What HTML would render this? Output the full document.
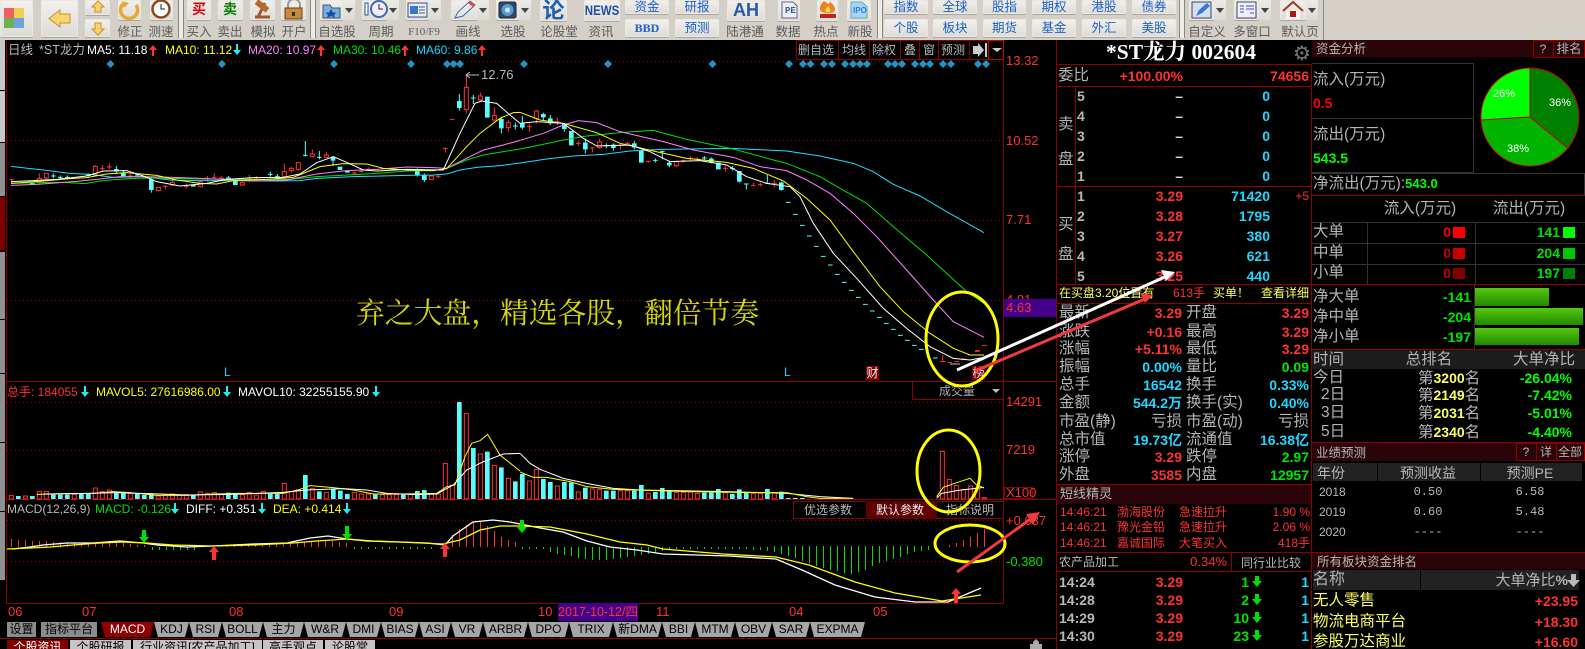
<!DOCTYPE html>
<html><head><meta charset="utf-8"><title>*ST龙力 002604</title>
<style>
html,body{margin:0;padding:0;background:#000}
#p{position:relative;width:1585px;height:649px;overflow:hidden;background:#000;font-family:"Liberation Sans","Noto Sans CJK SC",sans-serif;color:#b8b8b8}
.t{position:absolute;white-space:nowrap;line-height:0;font-size:12px}
.c{transform:translateX(-50%)}
.n{font-weight:bold;font-size:14px}
.g{font-size:15.5px;color:#b4b4b4}
.re{color:#ff3232}.cy{color:#1ed8ff}.gr{color:#00e600}.ye{color:#ffff64}.wh{color:#fff}
.m{font-family:"Liberation Mono",monospace}
.h,.v,.bx{position:absolute}
.h{height:1px;background:#8c0000}.v{width:1px;background:#8c0000}
#tb{position:absolute;left:0;top:0;width:1585px;height:40px;background:#d4d0c8}
.b{position:absolute;background:linear-gradient(#f2f1ed,#dddbd5);border-radius:2px;box-shadow:0 1px 0 #a8a69f,inset 0 0 0 1px #ece9e3}
.l{position:absolute;white-space:nowrap;line-height:0;top:32px;font-size:12.5px;color:#5a5a5a;transform:translateX(-50%)}
.s{position:absolute;top:0;width:4px;height:38px;border-left:1px solid #8a8880;border-right:1px solid #8a8880;background:#eeece6}
.bt{color:#1c5fc8;font-size:12.5px;text-align:center;line-height:15px}
.dd{position:absolute;top:0;height:20px;width:12px;background:linear-gradient(#ecebe6,#dcdad4)}
.dd:after{content:"";position:absolute;left:2px;top:8px;border:4px solid transparent;border-top:5px solid #444}
.tab{position:absolute;top:622px;height:15px;line-height:15px;font-size:12px;color:#000;background:#a6a6a6;text-align:center;clip-path:polygon(0 0,100% 0,calc(100% - 4px) 100%,4px 100%);white-space:nowrap;overflow:hidden}
.bt2{position:absolute;top:640px;height:12px;line-height:14px;font-size:12px;color:#000;background:#c4c4c4;text-align:center;white-space:nowrap;overflow:hidden}
.hd{position:absolute;background:#2a0408}
.tbh{position:absolute;background:#222}
.br{position:absolute;border:1px solid #8c0000;box-sizing:border-box}
svg{position:absolute;left:0;top:0}
</style></head><body><div id="p">

<div id="tb">
<div class="b" style="left:0;top:0;width:33px;height:37px"></div>
<div class="b" style="left:41px;top:0;width:37px;height:37px"></div>
<div class="b" style="left:85px;top:0;width:25px;height:15px"></div>
<div class="b" style="left:85px;top:19px;width:25px;height:18px"></div>
<div class="b" style="left:118px;top:0;width:23px;height:20px"></div>
<div class="b" style="left:150px;top:0;width:23px;height:20px"></div>
<div class="s" style="left:178px"></div>
<div class="b" style="left:187px;top:0;width:24px;height:20px"></div>
<div class="b" style="left:218px;top:0;width:25px;height:20px"></div>
<div class="b" style="left:250px;top:0;width:25px;height:20px"></div>
<div class="b" style="left:281px;top:0;width:25px;height:20px"></div>
<div class="s" style="left:310px"></div>
<div class="b" style="left:320px;top:0;width:23px;height:20px"></div><div class="dd" style="left:343px"></div>
<div class="b" style="left:362px;top:0;width:25px;height:20px"></div><div class="dd" style="left:387px"></div>
<div class="b" style="left:406px;top:0;width:23px;height:20px"></div><div class="dd" style="left:429px"></div>
<div class="b" style="left:451px;top:0;width:26px;height:20px"></div><div class="dd" style="left:477px"></div>
<div class="b" style="left:496px;top:0;width:23px;height:20px"></div><div class="dd" style="left:519px"></div>
<div class="b" style="left:540px;top:0;width:27px;height:21px;color:#1f5fb0;font:bold 22px/22px 'Liberation Sans','Noto Sans CJK SC',sans-serif;text-align:center">论</div>
<div class="b" style="left:584px;top:0;width:36px;height:21px"></div>
<span class="t c" style="left:602px;top:10px;font:bold 14px 'Liberation Sans',sans-serif;line-height:0;color:#1f4fa0;transform:translateX(-50%) scaleX(.82)">NEWS</span>
<div class="b bt" style="left:625px;top:0;width:44px;height:14px">资金</div>
<div class="b bt" style="left:625px;top:19px;width:44px;height:18px;line-height:18px;font:bold 12px/18px 'Liberation Serif',serif">BBD</div>
<div class="b bt" style="left:675px;top:0;width:44px;height:14px">研报</div>
<div class="b bt" style="left:675px;top:19px;width:44px;height:18px;line-height:18px">预测</div>
<div class="b" style="left:727px;top:0;width:38px;height:21px;color:#2a56a8;font:bold 18px/21px 'Liberation Sans',sans-serif;text-align:center">AH</div>
<div class="b" style="left:778px;top:0;width:22px;height:21px"></div>
<div class="b" style="left:817px;top:0;width:21px;height:21px"></div>
<div class="b" style="left:847px;top:0;width:24px;height:21px"></div>
<div class="s" style="left:877px"></div>
<div class="b bt" style="left:884px;top:0;width:44px;height:14px">指数</div><div class="b bt" style="left:884px;top:19px;width:44px;height:18px;line-height:18px">个股</div>
<div class="b bt" style="left:933px;top:0;width:44px;height:14px">全球</div><div class="b bt" style="left:933px;top:19px;width:44px;height:18px;line-height:18px">板块</div>
<div class="b bt" style="left:983px;top:0;width:43px;height:14px">股指</div><div class="b bt" style="left:983px;top:19px;width:43px;height:18px;line-height:18px">期货</div>
<div class="b bt" style="left:1032px;top:0;width:44px;height:14px">期权</div><div class="b bt" style="left:1032px;top:19px;width:44px;height:18px;line-height:18px">基金</div>
<div class="b bt" style="left:1082px;top:0;width:44px;height:14px">港股</div><div class="b bt" style="left:1082px;top:19px;width:44px;height:18px;line-height:18px">外汇</div>
<div class="b bt" style="left:1132px;top:0;width:44px;height:14px">债券</div><div class="b bt" style="left:1132px;top:19px;width:44px;height:18px;line-height:18px">美股</div>
<div class="s" style="left:1179px"></div>
<div class="b" style="left:1189px;top:0;width:25px;height:20px"></div><div class="dd" style="left:1214px"></div>
<div class="b" style="left:1234px;top:0;width:25px;height:20px"></div><div class="dd" style="left:1259px"></div>
<div class="b" style="left:1280px;top:0;width:26px;height:20px"></div><div class="dd" style="left:1306px"></div>
<div style="position:absolute;left:1323px;top:0;width:1px;height:40px;background:#8a8880"></div>

<span class="l" style="left:130px">修正</span><span class="l" style="left:161px">测速</span><span class="l" style="left:199px">买入</span><span class="l" style="left:230px">卖出</span><span class="l" style="left:263px">模拟</span><span class="l" style="left:294px">开户</span><span class="l" style="left:337px">自选股</span><span class="l" style="left:381px">周期</span><span class="l" style="left:424px;font-family:'Liberation Serif',serif;font-size:11px">F10/F9</span><span class="l" style="left:468px">画线</span><span class="l" style="left:513px">选股</span><span class="l" style="left:559px">论股堂</span><span class="l" style="left:601px">资讯</span><span class="l" style="left:745px">陆港通</span><span class="l" style="left:788px">数据</span><span class="l" style="left:826px">热点</span><span class="l" style="left:860px">新股</span><span class="l" style="left:1207px">自定义</span><span class="l" style="left:1252px">多窗口</span><span class="l" style="left:1300px">默认页</span>
<span class="t" style="left:192px;top:9px;font-size:14px;font-weight:bold;color:#e00000">买</span>
<span class="t" style="left:223px;top:9px;font-size:14px;font-weight:bold;color:#008000">卖</span>

<svg width="1585" height="40">
<rect x="4" y="8" width="10" height="10" fill="#f06060"/><rect x="14" y="8" width="10" height="10" fill="#f0d050"/><rect x="4" y="18" width="10" height="10" fill="#6cb050"/><rect x="14" y="18" width="10" height="10" fill="#6ca4e0"/>
<path d="M49 18.5L60 10V14H70V23H60V27Z" fill="#fad36c" stroke="#c8902c"/>
<path d="M98 1L104 7H101V12H95V7H92Z" fill="#fad36c" stroke="#c8902c"/>
<path d="M98 35L104 29H101V23H95V29H92Z" fill="#fad36c" stroke="#c8902c"/>
<path d="M136 5A8.500 8.500 0 1 1 123 4" fill="none" stroke="#e8a838" stroke-width="3.500"/><path d="M122 1L129 3L124 8Z" fill="#e8a838"/>
<circle cx="161" cy="9" r="8.500" fill="#fff" stroke="#8a4a20" stroke-width="2.500"/><path d="M161 4V9H165" fill="none" stroke="#222"/>
<path d="M255 17H270M258 17L265 3" stroke="#a05828" stroke-width="3" fill="none"/><rect x="255" y="3" width="14" height="6" fill="#b8682c" transform="rotate(38 262 6)"/>
<path d="M288 8V5A6 6 0 0 1 300 5V8" fill="none" stroke="#999" stroke-width="2"/><rect x="285" y="8" width="17" height="11" fill="#c88a3c" stroke="#6a4318"/><rect x="292" y="12" width="3" height="4" fill="#333"/>
<path d="M323 5H330L332 8H340V18H323Z" fill="#78aee8" stroke="#456"/><path d="M331 9L333 12.500H336.500L334 15L335 18L331 16L327 18L328 15L325.500 12.500H329Z" fill="#1c4c98"/>
<circle cx="379" cy="9" r="8" fill="#eef" stroke="#4468a8" stroke-width="2"/><rect x="365" y="3" width="3" height="12" fill="#fff" stroke="#2a4c9a"/><path d="M379 4V9H383" stroke="#223" fill="none"/>
<rect x="408" y="3" width="19" height="14" fill="#e8eefc" stroke="#334f88"/><rect x="410" y="6" width="8" height="8" fill="#3a78d0"/><path d="M419 7h6M419 10h6M419 13h6" stroke="#556"/>
<path d="M455 18L458 12L470 1L475 5L463 16Z" fill="#e8e8e8" stroke="#3a6ab0"/><path d="M468 3L473 7L475 5L470 1Z" fill="#e04848"/>
<rect x="499" y="2" width="17" height="16" rx="2" fill="#2a4a70" stroke="#223"/><circle cx="507.500" cy="10" r="6" fill="#5a9acc"/><circle cx="507.500" cy="10" r="2.500" fill="#c8e4f8"/>
<path d="M782 2H793L797 6V18H782Z" fill="#e8eefc" stroke="#667"/>
<path d="M824 1C820 5 820 6 820 9C820 12 824 13 828 13C832 13 835 12 835 9C835 6 832 4 830 1C830 4 828 5 827 3Z" fill="#f08020"/><path d="M826 12C824 9 827 8 828 6C829 8 831 9 830 12Z" fill="#ffe040"/><rect x="820" y="14" width="16" height="4" fill="#c02020"/>
<path d="M851 2H862L867 7V18H851Z" fill="#a8d4f4" stroke="#6aa"/>
<rect x="1192" y="2" width="19" height="16" fill="#cfe0f6" stroke="#445"/><path d="M1196 16L1199 10L1207 3L1210 6L1202 13Z" fill="#3a78d0"/>
<rect x="1237" y="2" width="19" height="16" fill="#eef" stroke="#445"/><path d="M1240 6h4M1240 9h4M1240 12h4M1246 6h8M1246 9h8M1250 13h4" stroke="#3a58a8"/>
<path d="M1283 11L1293 2L1303 11" fill="none" stroke="#a03a28" stroke-width="2"/><rect x="1286" y="10" width="14" height="9" fill="#f4f2ee"/><rect x="1290" y="11" width="6" height="6" fill="#b01818"/>
</svg>
<span class="t" style="left:785px;top:11px;font:bold 9px 'Liberation Mono',monospace;line-height:0;color:#3a5a90">PE</span>
<span class="t" style="left:853px;top:11px;font:bold 8px 'Liberation Sans',sans-serif;line-height:0;color:#2b80d8">IPO</span>
</div>

<!-- left strip -->
<div class="bx" style="left:0;top:40px;width:5px;height:50px;background:#c8c8c8"></div>
<div class="bx" style="left:0;top:91px;width:5px;height:51px;background:#c8c8c8"></div>
<div class="bx" style="left:0;top:143px;width:5px;height:53px;background:#909090"></div>
<div class="bx" style="left:0;top:197px;width:5px;height:53px;background:#800000"></div>
<div class="bx" style="left:0;top:252px;width:5px;height:67px;background:#909090"></div>
<div class="bx" style="left:0;top:320px;width:5px;height:53px;background:#909090"></div>
<div class="bx" style="left:0;top:374px;width:5px;height:68px;background:#909090"></div>
<div class="bx" style="left:0;top:443px;width:5px;height:68px;background:#909090"></div>
<div class="bx" style="left:0;top:512px;width:5px;height:68px;background:#909090"></div>

<!-- chart svg -->
<svg width="1585" height="649">
<defs>
<path id="ad" d="M-1-6h2v6h3l-4 5l-4-5h3z" fill="#2ee"/>
<path id="au" d="M-1 6h2v-6h3l-4-5l-4 5h3z" fill="#f33"/>
<path id="dia" d="M0-4L4 0L0 4L-4 0Z" fill="#1f96c8"/>
</defs>
<g stroke="#8c0000" stroke-width="1" stroke-dasharray="1 3" fill="none">
<path d="M7 61.500H1003M7 140.500H1003M7 220.500H1003M7 300.500H1003M7 402.500H1003M7 450.500H1003M7 520.500H1003M7 561.500H1003"/>
</g>
<g fill="none" stroke="#8c0000"><path d="M6.500 40V603.500H1003.500M1003.500 40V603.500M7 381.500H1056M7 499.500H1056M1056.500 40V649M0 638.500H1056"/></g>
<g>
<use href="#dia" x="110.500" y="64"/><use href="#dia" x="222" y="64"/><use href="#dia" x="334" y="64"/><use href="#dia" x="411" y="64"/><use href="#dia" x="447" y="64"/><use href="#dia" x="453.500" y="64"/><use href="#dia" x="460" y="64"/><use href="#dia" x="524" y="64"/><use href="#dia" x="608" y="64"/><use href="#dia" x="712.500" y="64"/><use href="#dia" x="789" y="64"/><use href="#dia" x="803" y="64"/><use href="#dia" x="810.500" y="64"/><use href="#dia" x="824" y="64"/><use href="#dia" x="832" y="64"/><use href="#dia" x="845" y="64"/><use href="#dia" x="853" y="64"/><use href="#dia" x="860" y="64"/><use href="#dia" x="867" y="64"/><use href="#dia" x="888" y="64"/><use href="#dia" x="895" y="64"/><use href="#dia" x="902" y="64"/><use href="#dia" x="915" y="64"/><use href="#dia" x="923" y="64"/><use href="#dia" x="930" y="64"/><use href="#dia" x="943" y="64"/><use href="#dia" x="951" y="64"/><use href="#dia" x="978" y="64"/><use href="#dia" x="986" y="64"/>
</g>
<use href="#au" x="153" y="50"/><use href="#ad" x="237" y="50"/><use href="#au" x="321" y="50"/><use href="#au" x="405" y="50"/><use href="#au" x="482" y="50"/>
<use href="#ad" x="85" y="392"/><use href="#ad" x="227" y="392"/><use href="#ad" x="376" y="392"/>
<use href="#ad" x="175" y="509"/><use href="#ad" x="262" y="509"/><use href="#ad" x="347" y="509"/>

<!-- main chart left -->
<g transform="translate(0,70) scale(.33333)" fill="none" stroke-width="3">
<path stroke="#ff3232" d="M118 310V340M139 310V330M286 285V315M517 330V348M601 332V352M853 280V325M895 276V302M937 238V262M874 290V308M979 245V262M1294 318V330M1399 15V130M1441 68V95M1483 112V155M1525 150V185M727 335V348M475 352V362M28 328h14M35 328V340M307 285V305M300 295h14M328 280V298M321 291h14M391 312V325M384 318h14M496 345V358M489 349h14M559 340V355M552 349h14M622 318V335M615 325h14M643 310V328M636 322h14M664 318V330M657 324h14M748 315V335M741 325h14M769 318V330M762 324h14M1063 305V315M1056 309h14M1084 300V308M1077 304h14M1105 292V302M1098 298h14M1315 315V325M1308 319h14M1329 235h14M1336 235V248M1350 148h14"/>
<path stroke="#ff3232" fill="#000" d="M112 325h12v10h-12zM133 310h12v14h-12zM280 289h12v23h-12zM469 352h12v10h-12zM511 337h12v8h-12zM595 336h12v14h-12zM847 305h12v15h-12zM889 278h12v20h-12zM931 252h12v8h-12zM868 295h12v7h-12zM973 255h12v7h-12zM1288 318h12v10h-12zM1393 52h12v66h-12zM1435 78h12v12h-12zM1477 136h12v14h-12zM1519 158h12v15h-12zM721 338h12v7h-12z"/>
<path stroke="#55ffff" d="M454 325V368M1252 295V320M1273 310V336M1378 72V122M1504 140V190M999 258V288M349 288V310M370 300V320M160 310V325M153 318h14M181 316V328M174 322h14M202 316V328M195 322h14M412 310V320M405 315h14M685 318V330M678 324h14M811 305V320M804 313h14M832 312V325M825 319h14M916 213V260M909 256h14M958 243V268M951 262h14M1420 75V102M1413 84h14M1546 158V178M1539 168h14M265 310V320"/>
<path stroke="#55ffff" stroke-width="14" d="M454 328V360M97 338V345M706 332V345M1252 303V315M1273 315V330M1378 93V114M1462 80V143M1504 147V175M999 262V272M1020 290V300M1042 302V308M370 308V318M349 297V304M580 345V350M265 313V318"/>
<g stroke-width="3">
<polyline stroke="#22ddff" points="33,289 85,295 130,300 210,310 270,313 340,322 430,320 510,330 600,332 700,332 830,333 900,332 950,325 1060,320 1220,316 1300,315 1340,312 1380,300 1430,292 1500,287 1560,279"/>
<polyline stroke="#00e000" points="33,340 120,338 190,337 255,341 300,333 350,328 430,324 510,325 620,327 760,328 870,328 950,320 1020,316 1130,310 1220,303 1300,302 1340,295 1400,270 1450,255 1510,245 1560,237"/>
<polyline stroke="#ff80ff" points="33,346 110,343 230,334 300,327 360,320 430,320 520,322 620,326 760,333 860,330 950,312 1040,302 1130,298 1220,291 1300,293 1340,295 1400,265 1450,240 1510,225 1560,211"/>
<polyline stroke="#ffff00" points="33,340 130,333 210,326 260,323 320,312 380,308 470,316 530,330 600,340 650,342 700,332 800,328 880,322 960,290 1030,281 1100,282 1150,295 1220,300 1300,302 1340,296 1400,230 1440,190 1500,145 1540,128 1560,127"/>
<polyline stroke="#fff" points="33,335 100,332 170,328 260,318 310,303 380,302 430,318 470,335 540,348 620,340 680,328 760,323 850,322 900,312 950,278 1000,260 1040,277 1090,300 1130,303 1220,298 1330,300 1380,190 1425,100 1445,93 1490,100 1530,135 1560,160"/>
</g>
</g>

<!-- main chart right -->
<g transform="translate(520,70) scale(.33333)" fill="none" stroke-width="3">
<path stroke="#ff3232" d="M49 120V160M239 205V236M469 272V292M28 160V185M21 170h14M112 142V165M105 155h14M175 212V228M168 220h14M217 232V248M210 234h14M301 222V238M294 226h14M322 216V228M315 220h14M385 272V278M378 274h14M490 268V278M483 272h14M511 258V272M504 265h14M532 262V272M525 267h14M616 288V305M609 295h14M700 338V348M693 347h14M721 338V350M714 344h14M763 330V352M756 340h14M1268 855V875M1259 875h18M1282 878h14M1303 875h14M1344 855h14M1386 826h14"/>
<path stroke="#ff3232" fill="#000" d="M43 123h12v22h-12zM233 216h12v17h-12zM463 274h12v13h-12z"/>
<path stroke="#ff3232" stroke-width="5" d="M1365 843h14M1323 868h14"/>
<path stroke="#55ffff" d="M7 138V178M91 135V165M133 160V185M196 205V250M343 213V238M448 272V292M574 262V280M658 303V338M784 335V362M70 128V152M280 220V242M259 220V235M252 227h14M406 265V278M399 271h14M427 242V268M420 244h14M553 258V272M546 264h14M637 288V302M630 295h14M679 340V358M672 342h14M742 315V340M735 340h14"/>
<path stroke="#55ffff" stroke-width="14" d="M7 160V173M91 145V160M133 160V177M154 183V226M196 218V238M364 240V278M343 220V232M448 278V286M574 266V278M595 278V298M658 303V335M784 337V360M70 132V142M280 224V234"/>
<path stroke="#55ffff" d="M798 397h14M819 433h14M840 466h14M861 498h14M882 529h14M903 559h14M924 585h14M945 613h14M966 637h14M987 661h14M1008 682h14M1029 703h14M1050 723h14M1071 742h14M1092 760h14M1113 778h14M1134 796h14M1155 811h14M1176 826h14M1197 838h14M1239 864h14"/>
<polyline stroke="#22ddff" points="0,279 80,267 160,258 250,253 330,243 420,238 640,235 800,243 900,258 1000,280 1060,305 1120,343 1200,378 1280,425 1392,488"/>
<polyline stroke="#00e000" points="0,237 60,225 130,210 200,198 300,188 400,181 500,208 640,237 760,270 800,280 900,320 960,355 1040,400 1120,470 1220,555 1340,665 1392,700"/>
<polyline stroke="#ff80ff" points="0,211 70,190 130,165 175,152 230,158 300,185 430,215 520,240 640,262 720,290 800,302 860,330 930,370 1000,430 1070,500 1160,600 1240,690 1300,755 1392,802"/>
<polyline stroke="#ffff00" points="0,127 60,150 130,160 230,188 300,220 400,243 500,265 620,277 700,295 790,333 860,385 930,450 1000,545 1080,650 1150,725 1230,790 1300,835 1350,855 1392,855"/>
<polyline stroke="#fff" points="0,160 50,155 130,160 190,205 230,228 330,225 390,245 450,275 540,272 620,285 680,320 740,340 810,350 840,380 880,460 940,550 1010,625 1090,715 1160,775 1230,830 1300,865 1350,870 1392,862"/>
<path stroke="#bbb" stroke-width="3" d="M1290 882h30"/>
</g>

<!-- peak marker -->
<path d="M466 75h13M470 72l-4 3l4 3" stroke="#bbb" fill="none"/>

<!-- volume bars -->
<g transform="translate(0,370) scale(.33333)" fill="none" stroke-width="3">
<path stroke="#55ffff" stroke-width="14" d="M55 378V387M97 378V387M160 374V387M181 374V387M202 374V387M244 370V387M265 370V387M349 366V387M370 366V387M412 372V387M433 375V387M454 370V387M580 374V387M685 368V387M706 370V387M811 372V387M832 372V387M916 315V387M958 364V387M1000 358V387M1021 362V387M1042 372V387M1126 374V387M1210 374V387M1252 363V387M1273 360V387M1378 96V387M1420 234V387M1462 245V387M1504 292V387M1546 334V387"/>
<path stroke="#ff3232" d="M28 376h12V387h-12zM70 378h12V387h-12zM112 364h12V387h-12zM133 364h12V387h-12zM217 373h12V387h-12zM280 354h12V387h-12zM301 365h12V387h-12zM322 360h12V387h-12zM385 370h12V387h-12zM469 378h12V387h-12zM490 375h12V387h-12zM511 372h12V387h-12zM532 376h12V387h-12zM553 374h12V387h-12zM595 366h12V387h-12zM616 370h12V387h-12zM637 368h12V387h-12zM658 372h12V387h-12zM721 374h12V387h-12zM742 367h12V387h-12zM763 375h12V387h-12zM784 364h12V387h-12zM847 340h12V387h-12zM868 365h12V387h-12zM889 360h12V387h-12zM931 355h12V387h-12zM973 367h12V387h-12zM1057 368h12V387h-12zM1078 372h12V387h-12zM1099 372h12V387h-12zM1141 374h12V387h-12zM1162 374h12V387h-12zM1183 374h12V387h-12zM1225 373h12V387h-12zM1288 372h12V387h-12zM1309 372h12V387h-12zM1330 280h12V387h-12zM1351 345h12V387h-12zM1393 130h12V387h-12zM1435 252h12V387h-12zM1477 286h12V387h-12zM1519 325h12V387h-12z"/>
<polyline stroke="#ffff00" points="110,373 200,371 280,370 340,365 390,368 470,376 560,376 640,372 720,370 850,370 900,358 930,347 1000,353 1060,360 1120,372 1200,372 1310,370 1340,350 1365,345 1395,260 1415,220 1440,212 1463,193 1500,255 1560,303"/>
<polyline stroke="#fff" points="130,372 230,371 350,368 480,372 560,375 700,373 850,367 920,360 1030,356 1100,360 1160,370 1250,374 1310,372 1360,345 1400,300 1450,275 1510,252 1560,250"/>
</g>
<g transform="translate(520,370) scale(.33333)" fill="none" stroke-width="3">
<path stroke="#55ffff" stroke-width="14" d="M7 312V387M70 327V387M91 336V387M133 336V387M154 338V387M196 353V387M259 362V387M280 362V387M343 362V387M364 345V387M406 366V387M427 354V387M448 362V387M553 368V387M574 368V387M595 357V387M637 372V387M658 358V387M679 366V387M742 357V387M784 365V387M805 384V387M826 384V387M847 384V387"/>
<path stroke="#ff3232" d="M22 333h12V387h-12zM43 298h12V387h-12zM106 348h12V387h-12zM169 366h12V387h-12zM211 357h12V387h-12zM232 358h12V387h-12zM295 362h12V387h-12zM316 362h12V387h-12zM379 370h12V387h-12zM463 368h12V387h-12zM484 368h12V387h-12zM505 366h12V387h-12zM526 370h12V387h-12zM610 368h12V387h-12zM694 370h12V387h-12zM715 370h12V387h-12zM757 368h12V387h-12zM1261 244h12V387h-12zM1282 328h12V387h-12zM1303 346h12V387h-12zM1324 358h12V387h-12zM1345 348h12V387h-12zM1366 354h12V387h-12zM1387 383h12V387h-12z"/>
<polyline stroke="#fff" points="0,250 30,280 60,298 130,325 200,340 280,355 360,360 620,365 800,370 900,380 1000,385"/>
<polyline stroke="#ffff00" points="0,306 40,322 80,322 150,335 200,350 280,358 340,360 500,365 700,368 800,368 860,380 900,385 1000,385"/>
<polyline stroke="#fff" points="1250,385 1265,370 1310,362 1392,352"/>
<polyline stroke="#ffff00" points="1250,380 1270,352 1310,338 1350,325 1370,345 1392,354"/>
</g>

<!-- MACD bars -->
<g transform="translate(.5,0)">
<path fill="none" stroke="#ff3232" d="M11 547V539M18 547V540M25 547V540M32 547V541M39 547V541M46 547V541M53 547V542M60 547V542M67 547V542M74 547V542M81 547V543M88 547V543M95 547V543M102 547V543M109 547V543M116 547V543M123 547V543M130 547V544M137 547V545M144 547V545M227 547V545M234 547V544M241 547V544M248 547V545M255 547V545M262 547V544M269 547V544M276 547V544M283 547V544M290 547V543M297 547V543M304 547V542M311 547V541M318 547V540M325 547V540M332 547V541M339 547V542M346 547V543M452 547V535M459 547V529M466 547V525M473 547V522M480 547V521M487 547V526M494 547V531M501 547V537M508 547V540M515 547V542M949 547V545M956 547V543M963 547V540M970 547V537M977 547V533M984 547V529"/>
<path fill="none" stroke="#00e000" d="M152 547V550M159 547V550M166 547V550M173 547V550M180 547V550M187 547V550M194 547V550M354 547V549M361 547V549M368 547V549M375 547V549M382 547V549M389 547V549M396 547V549M403 547V549M410 547V549M417 547V549M424 547V549M431 547V549M522 547V549M529 547V549M536 547V549M543 547V549M550 547V552M557 547V554M564 547V555M571 547V556M578 547V558M585 547V559M592 547V560M599 547V560M606 547V560M613 547V559M620 547V558M627 547V557M634 547V556M641 547V555M648 547V554M655 547V553M662 547V551M669 547V550M676 547V549M683 547V549M690 547V549M697 547V549M704 547V549M711 547V549M718 547V549M725 547V549M732 547V549M739 547V549M746 547V549M753 547V550M760 547V550M767 547V551M774 546V552M781 546V554M788 546V556M795 546V558M802 546V561M809 546V563M816 546V566M823 546V568M830 546V570M837 546V571M844 546V573M851 546V574M858 546V572M865 546V570M872 546V566M879 546V563M886 546V561M893 546V559M900 546V557M907 546V554M914 546V552M921 546V551M928 546V550M935 546V549"/>
</g>
<polyline fill="none" stroke="#fff" stroke-width="1.300" points="12,549 30,547 43,545 67,543 93,543 120,541 143,543 157,545 187,547 213,546 253,544 287,543 310,538 328,536 347,539 367,541 400,542 427,543 445,545 453,536 473,522 493,520 510,522 520,524 540,528 563,532 587,541 610,547 637,550 663,554 729,556 776,559 802,570 835,585 875,597 915,602 948,602 981,588"/>
<polyline fill="none" stroke="#ffff00" stroke-width="1.300" points="7,549 30,548 50,547 73,545 100,543 123,542 147,543 173,545 213,546 253,545 293,543 317,541 347,539 373,541 400,542 443,544 460,540 480,530 500,526 520,526 550,527 587,534 620,542 647,545 663,549 723,554 776,557 809,565 855,582 895,593 942,601 981,595"/>
<path fill="#00e000" d="M142 530h4v7h3l-5 6l-5-6h3zM345 526h4v8h3l-5 6l-5-6h3zM520 520h4v7h3l-5 6l-5-6h3z"/>
<path fill="#ff3232" d="M212 560h4v-8h3l-5-6l-5 6h3zM443 557h4v-8h3l-5-6l-5 6h3zM954 603h4v-9h3l-5-6l-5 6h3z"/>
<path d="M1030 649V644H1033V642L1036 639L1039 642V644H1042V649Z" fill="#aaa"/>
</svg>

<!-- chart legend -->
<span class="t" style="left:8px;top:50px;font-size:12.500px">日线</span>
<span class="t" style="left:39px;top:50px;font-size:12.500px">*ST龙力</span>
<span class="t" style="left:87px;top:50px;color:#fff">MA5: 11.18</span>
<span class="t" style="left:165px;top:50px;color:#ffff00">MA10: 11.12</span>
<span class="t" style="left:248px;top:50px;color:#ff80ff">MA20: 10.97</span>
<span class="t" style="left:333px;top:50px;color:#00e000">MA30: 10.46</span>
<span class="t" style="left:416px;top:50px;color:#10d8ff">MA60: 9.86</span>

<div class="br" style="left:796px;top:40px;width:208px;height:20px;border-color:#8c0000"></div>
<div class="v" style="left:838px;top:40px;height:20px"></div><div class="v" style="left:869px;top:40px;height:20px"></div><div class="v" style="left:900px;top:40px;height:20px"></div><div class="v" style="left:919px;top:40px;height:20px"></div><div class="v" style="left:938px;top:40px;height:20px"></div><div class="v" style="left:969px;top:40px;height:20px"></div>
<div class="br" style="left:988px;top:40px;width:16px;height:20px;border-color:#d00000"></div>
<span class="t" style="left:798px;top:50px">删自选</span><span class="t" style="left:842px;top:50px">均线</span><span class="t" style="left:872px;top:50px">除权</span><span class="t" style="left:904px;top:50px">叠</span><span class="t" style="left:923px;top:50px">窗</span><span class="t" style="left:941px;top:50px">预测</span>
<svg width="1585" height="70" style="pointer-events:none"><path d="M973 46h5v-3l6 7l-6 7v-3h-5zM985 43h2v14h-2zM992 48h10l-5 4z" fill="#ccc"/></svg>

<span class="t re" style="left:1006px;top:61px;font-size:13px">13.32</span>
<span class="t re" style="left:1006px;top:141px;font-size:13px">10.52</span>
<span class="t re" style="left:1006px;top:220px;font-size:13px">7.71</span>
<span class="t re" style="left:1006px;top:300px;font-size:13px">4.91</span>
<div class="bx" style="left:1004px;top:299px;width:52px;height:18px;background:#440088"></div>
<span class="t re" style="left:1006px;top:308px;font-size:13px">4.63</span>

<span class="t" style="left:481px;top:75px;font-size:13px;color:#b8b8b8">12.76</span>
<span class="t" style="left:356px;top:314px;font-size:28.800px;color:#d8d800;font-family:'Liberation Serif','Noto Serif CJK SC',serif">弃之大盘，精选各股，翻倍节奏</span>
<span class="t" style="left:224px;top:372px;color:#10d8ff;font-size:12px">L</span>
<span class="t" style="left:784px;top:372px;color:#10d8ff;font-size:12px">L</span>
<div class="bx" style="left:866px;top:366px;width:13px;height:14px;background:#800000;color:#eee;font-size:12px;line-height:14px;text-align:center">财</div>
<div class="bx" style="left:972px;top:366px;width:13px;height:14px;background:#800000;color:#eee;font-size:12px;line-height:14px;text-align:center">榜</div>

<span class="t re" style="left:7px;top:392px">总手: 184055</span>
<span class="t" style="left:96px;top:392px;color:#ffff00">MAVOL5: 27616986.00</span>
<span class="t" style="left:238px;top:392px;color:#fff">MAVOL10: 32255155.90</span>
<div class="br" style="left:912px;top:382px;width:92px;height:18px;border-top:0"></div>
<span class="t c" style="left:957px;top:391px;color:#aaa">成交量</span>
<svg width="1585" height="400"><path d="M992 389h8l-4 4z" fill="#bbb"/></svg>
<span class="t re" style="left:1006px;top:402px;font-size:13px">14291</span>
<span class="t re" style="left:1006px;top:450px;font-size:13px">7219</span>
<div class="br" style="left:1004px;top:487px;width:29px;height:12px"></div>
<span class="t re" style="left:1006px;top:493px;font-size:13px">X100</span>

<span class="t" style="left:7px;top:509px;color:#b8b8b8">MACD(12,26,9)</span>
<span class="t" style="left:95px;top:509px;color:#00e000">MACD: -0.126</span>
<span class="t" style="left:186px;top:509px;color:#fff">DIFF: +0.351</span>
<span class="t" style="left:273px;top:509px;color:#ffff00">DEA: +0.414</span>
<div class="br" style="left:793px;top:501px;width:211px;height:18px"></div>
<div class="bx" style="left:866px;top:501px;width:71px;height:18px;background:#600000"></div>
<span class="t c" style="left:828px;top:510px;color:#b8b8b8">优选参数</span><span class="t c" style="left:900px;top:510px;color:#eee">默认参数</span><span class="t c" style="left:970px;top:510px;color:#b8b8b8">指标说明</span>
<span class="t re" style="left:1006px;top:521px;font-size:13px">+0.637</span>
<span class="t gr" style="left:1006px;top:562px;font-size:13px">-0.380</span>

<span class="t re" style="left:8px;top:612px;font-size:13px">06</span><span class="t re" style="left:82px;top:612px;font-size:13px">07</span><span class="t re" style="left:229px;top:612px;font-size:13px">08</span><span class="t re" style="left:389px;top:612px;font-size:13px">09</span><span class="t re" style="left:538px;top:612px;font-size:13px">10</span><span class="t re" style="left:656px;top:612px;font-size:13px">11</span><span class="t re" style="left:789px;top:612px;font-size:13px">04</span><span class="t re" style="left:873px;top:612px;font-size:13px">05</span>
<div class="bx" style="left:558px;top:603px;width:80px;height:18px;background:#44008c"></div>
<span class="t re c" style="left:598px;top:612px;font-size:12.500px">2017-10-12/四</span>

<div class="tab" style="left:7px;width:29px;background:#8c8c8c;clip-path:none">设置</div>
<div class="tab" style="left:41px;width:56px;background:#8c8c8c;clip-path:none">指标平台</div>
<div class="tab" style="left:101px;width:53px;background:#900000;color:#fff">MACD</div>
<div class="tab" style="left:154px;width:35px">KDJ</div><div class="tab" style="left:189px;width:33px">RSI</div><div class="tab" style="left:222px;width:41px">BOLL</div><div class="tab" style="left:263px;width:41px">主力</div><div class="tab" style="left:304px;width:42px">W&amp;R</div><div class="tab" style="left:346px;width:35px">DMI</div><div class="tab" style="left:381px;width:38px">BIAS</div><div class="tab" style="left:419px;width:32px">ASI</div><div class="tab" style="left:451px;width:32px">VR</div><div class="tab" style="left:483px;width:45px">ARBR</div><div class="tab" style="left:528px;width:41px">DPO</div><div class="tab" style="left:569px;width:44px">TRIX</div><div class="tab" style="left:613px;width:49px">新DMA</div><div class="tab" style="left:662px;width:33px">BBI</div><div class="tab" style="left:695px;width:40px">MTM</div><div class="tab" style="left:735px;width:37px">OBV</div><div class="tab" style="left:772px;width:38px">SAR</div><div class="tab" style="left:810px;width:55px">EXPMA</div>
<div class="bt2" style="left:7px;width:61px;background:#800000;color:#fff">个股资讯</div><div class="bt2" style="left:70px;width:61px">个股研报</div><div class="bt2" style="left:133px;width:129px">行业资讯[农产品加工]</div><div class="bt2" style="left:263px;width:60px">高手观点</div><div class="bt2" style="left:325px;width:50px">论股堂</div>

<!-- quote panel -->
<span class="t c" style="left:1181px;top:52px;font:bold 21.5px 'Liberation Serif','Noto Serif CJK SC',serif;line-height:0;color:#fff">*ST龙力 002604</span>
<span class="t" style="left:1293px;top:53px;font:20px 'DejaVu Sans',sans-serif;line-height:0;color:#777">⚙</span>
<div class="br" style="left:1056px;top:64px;width:256px;height:585px;border-bottom:0"></div>
<div class="h" style="left:1056px;top:86px;width:255px"></div>
<div class="h" style="left:1056px;top:186px;width:255px"></div>
<div class="h" style="left:1056px;top:284px;width:255px"></div>
<div class="h" style="left:1056px;top:303px;width:255px"></div>
<div class="h" style="left:1056px;top:484px;width:255px"></div>
<div class="h" style="left:1056px;top:552px;width:255px"></div>
<div class="h" style="left:1056px;top:571px;width:255px"></div>
<div class="v" style="left:1075px;top:86px;height:198px"></div>
<div class="v" style="left:1231px;top:552px;height:19px"></div>
<div class="bx" style="left:1057px;top:485px;width:254px;height:19px;background:#2a0408"></div>

<span class="t g" style="left:1058px;top:76px">委比</span>
<span class="t n re" style="right:402px;top:76px">+100.00%</span>
<span class="t n re" style="right:276px;top:76px">74656</span>
<span class="t g" style="left:1058px;top:125px">卖</span><span class="t g" style="left:1058px;top:160px">盘</span>
<span class="t g" style="left:1058px;top:225px">买</span><span class="t g" style="left:1058px;top:255px">盘</span>

<span class="t n" style="left:1077px;top:96px">5</span><span class="t n" style="left:1077px;top:116px">4</span><span class="t n" style="left:1077px;top:136px">3</span><span class="t n" style="left:1077px;top:156px">2</span><span class="t n" style="left:1077px;top:176px">1</span>
<span class="t n" style="right:402px;top:96px;color:#ddd">–</span><span class="t n" style="right:402px;top:116px;color:#ddd">–</span><span class="t n" style="right:402px;top:136px;color:#ddd">–</span><span class="t n" style="right:402px;top:156px;color:#ddd">–</span><span class="t n" style="right:402px;top:176px;color:#ddd">–</span>
<span class="t n cy" style="right:315px;top:96px">0</span><span class="t n cy" style="right:315px;top:116px">0</span><span class="t n cy" style="right:315px;top:136px">0</span><span class="t n cy" style="right:315px;top:156px">0</span><span class="t n cy" style="right:315px;top:176px">0</span>

<span class="t n" style="left:1077px;top:196px">1</span><span class="t n" style="left:1077px;top:216px">2</span><span class="t n" style="left:1077px;top:236px">3</span><span class="t n" style="left:1077px;top:256px">4</span><span class="t n" style="left:1077px;top:276px">5</span>
<span class="t n re" style="right:402px;top:196px">3.29</span><span class="t n re" style="right:402px;top:216px">3.28</span><span class="t n re" style="right:402px;top:236px">3.27</span><span class="t n re" style="right:402px;top:256px">3.26</span><span class="t n re" style="right:402px;top:276px">3.25</span>
<span class="t n cy" style="right:315px;top:196px">71420</span><span class="t n cy" style="right:315px;top:216px">1795</span><span class="t n cy" style="right:315px;top:236px">380</span><span class="t n cy" style="right:315px;top:256px">621</span><span class="t n cy" style="right:315px;top:276px">440</span>
<span class="t re" style="right:276px;top:196px">+5</span>

<span class="t ye" style="left:1059px;top:293px">在买盘3.20位置有</span>
<span class="t re" style="left:1173px;top:293px">613手</span>
<span class="t ye" style="left:1213px;top:293px">买单！</span>
<span class="t ye" style="right:276px;top:293px">查看详细</span>

<span class="t g" style="left:1059px;top:313px">最新</span><span class="t n re" style="right:403px;top:313px">3.29</span><span class="t g" style="left:1186px;top:313px">开盘</span><span class="t n re" style="right:276px;top:313px">3.29</span>
<span class="t g" style="left:1059px;top:332px">涨跌</span><span class="t n re" style="right:403px;top:332px">+0.16</span><span class="t g" style="left:1186px;top:332px">最高</span><span class="t n re" style="right:276px;top:332px">3.29</span>
<span class="t g" style="left:1059px;top:349px">涨幅</span><span class="t n re" style="right:403px;top:349px">+5.11%</span><span class="t g" style="left:1186px;top:349px">最低</span><span class="t n re" style="right:276px;top:349px">3.29</span>
<span class="t g" style="left:1059px;top:367px">振幅</span><span class="t n cy" style="right:403px;top:367px">0.00%</span><span class="t g" style="left:1186px;top:367px">量比</span><span class="t n gr" style="right:276px;top:367px">0.09</span>
<span class="t g" style="left:1059px;top:385px">总手</span><span class="t n cy" style="right:403px;top:385px">16542</span><span class="t g" style="left:1186px;top:385px">换手</span><span class="t n cy" style="right:276px;top:385px">0.33%</span>
<span class="t g" style="left:1059px;top:403px">金额</span><span class="t n cy" style="right:403px;top:403px">544.2万</span><span class="t g" style="left:1186px;top:403px">换手(实)</span><span class="t n cy" style="right:276px;top:403px">0.40%</span>
<span class="t g" style="left:1059px;top:422px">市盈(静)</span><span class="t g" style="right:403px;top:422px">亏损</span><span class="t g" style="left:1186px;top:422px">市盈(动)</span><span class="t g" style="right:276px;top:422px">亏损</span>
<span class="t g" style="left:1059px;top:440px">总市值</span><span class="t n cy" style="right:403px;top:440px">19.73亿</span><span class="t g" style="left:1186px;top:440px">流通值</span><span class="t n cy" style="right:276px;top:440px">16.38亿</span>
<span class="t g" style="left:1059px;top:457px">涨停</span><span class="t n re" style="right:403px;top:457px">3.29</span><span class="t g" style="left:1186px;top:457px">跌停</span><span class="t n gr" style="right:276px;top:457px">2.97</span>
<span class="t g" style="left:1059px;top:475px">外盘</span><span class="t n re" style="right:403px;top:475px">3585</span><span class="t g" style="left:1186px;top:475px">内盘</span><span class="t n gr" style="right:276px;top:475px">12957</span>

<span class="t" style="left:1060px;top:494px;font-size:13px">短线精灵</span>
<span class="t re" style="left:1060px;top:512px">14:46:21</span><span class="t re" style="left:1117px;top:512px">渤海股份</span><span class="t re" style="left:1179px;top:512px">急速拉升</span><span class="t re" style="right:275px;top:512px">1.90 %</span>
<span class="t re" style="left:1060px;top:527px">14:46:21</span><span class="t re" style="left:1117px;top:527px">豫光金铅</span><span class="t re" style="left:1179px;top:527px">急速拉升</span><span class="t re" style="right:275px;top:527px">2.06 %</span>
<span class="t re" style="left:1060px;top:543px">14:46:21</span><span class="t re" style="left:1117px;top:543px">嘉诚国际</span><span class="t re" style="left:1179px;top:543px">大笔买入</span><span class="t re" style="right:275px;top:543px">418手</span>

<span class="t" style="left:1059px;top:562px">农产品加工</span><span class="t re" style="right:358px;top:562px;font-size:13px">0.34%</span><span class="t c" style="left:1271px;top:563px">同行业比较</span>
<span class="t n" style="left:1059px;top:582px">14:24</span><span class="t n re" style="right:402px;top:582px">3.29</span><span class="t n gr" style="right:336px;top:582px">1</span><span class="t n cy" style="right:276px;top:582px">1</span>
<span class="t n" style="left:1059px;top:600px">14:28</span><span class="t n re" style="right:402px;top:600px">3.29</span><span class="t n gr" style="right:336px;top:600px">2</span><span class="t n cy" style="right:276px;top:600px">1</span>
<span class="t n" style="left:1059px;top:618px">14:29</span><span class="t n re" style="right:402px;top:618px">3.29</span><span class="t n gr" style="right:336px;top:618px">10</span><span class="t n cy" style="right:276px;top:618px">1</span>
<span class="t n" style="left:1059px;top:636px">14:30</span><span class="t n re" style="right:402px;top:636px">3.29</span><span class="t n gr" style="right:336px;top:636px">23</span><span class="t n cy" style="right:276px;top:636px">1</span>
<svg width="1585" height="649"><path fill="#00e000" d="M1255 576h4v5h3l-5 6l-5-6h3zM1255 594h4v5h3l-5 6l-5-6h3zM1255 612h4v5h3l-5 6l-5-6h3zM1255 630h4v5h3l-5 6l-5-6h3z"/></svg>

<!-- funds panel -->
<div class="hd" style="left:1312px;top:40px;width:273px;height:17px"></div>
<span class="t" style="left:1316px;top:49px;font-size:12.500px">资金分析</span>
<div class="br" style="left:1533px;top:40px;width:21px;height:18px"></div><div class="br" style="left:1553px;top:40px;width:32px;height:18px"></div>
<span class="t c" style="left:1543px;top:49px">?</span><span class="t c" style="left:1569px;top:49px;font-size:12.500px">排名</span>

<div class="bx" style="left:1312px;top:63px;width:162px;height:110px;border:1px solid #333;border-left:0;box-sizing:border-box"></div>
<div class="bx" style="left:1312px;top:118px;width:162px;height:1px;background:#333"></div>
<span class="t g" style="left:1313px;top:80px">流入(万元)</span><span class="t n" style="left:1313px;top:103px;color:#ff0000">0.5</span>
<span class="t g" style="left:1313px;top:135px">流出(万元)</span><span class="t n" style="left:1313px;top:158px;color:#00ff00">543.5</span>
<svg width="1585" height="200"><path d="M1530 117V68A49 49 0 0 1 1567.800 148.200Z" fill="#008000" stroke="#c00000"/><path d="M1530 117L1567.800 148.200A49 49 0 0 1 1481 120Z" fill="#00b400" stroke="#c00000"/><path d="M1530 117L1481 120A49 49 0 0 1 1530 68Z" fill="#00ff00" stroke="#c00000"/></svg>
<span class="t c wh" style="left:1504px;top:94px;font-size:11px">26%</span><span class="t c wh" style="left:1560px;top:103px;font-size:11px">36%</span><span class="t c wh" style="left:1518px;top:149px;font-size:11px">38%</span>

<div class="bx" style="left:1312px;top:173px;width:273px;height:23px;border-top:1px solid #333;border-right:1px solid #333;box-sizing:border-box;border-bottom:1px solid #8c0000"></div>
<span class="t g" style="left:1313px;top:184px">净流出(万元):<b style="color:#00ff00;font-size:13px">543.0</b></span>
<span class="t g c" style="left:1420px;top:209px">流入(万元)</span><span class="t g c" style="left:1529px;top:209px">流出(万元)</span>
<div class="h" style="left:1312px;top:222px;width:273px;background:#333"></div>
<div class="h" style="left:1312px;top:243px;width:273px;background:#333"></div>
<div class="h" style="left:1312px;top:264px;width:273px;background:#333"></div>
<div class="v" style="left:1367px;top:222px;height:62px;background:#333"></div>
<div class="v" style="left:1475px;top:222px;height:62px;background:#333"></div>
<div class="h" style="left:1312px;top:284px;width:273px"></div>
<span class="t g" style="left:1313px;top:232px">大单</span><span class="t g" style="left:1313px;top:253px">中单</span><span class="t g" style="left:1313px;top:273px">小单</span>
<span class="t n" style="right:134px;top:232px;color:#ff0000">0</span><span class="t n" style="right:134px;top:253px;color:#c80000">0</span><span class="t n" style="right:134px;top:273px;color:#c80000">0</span>
<div class="bx" style="left:1453px;top:227px;width:12px;height:11px;background:#ff0000"></div><div class="bx" style="left:1453px;top:248px;width:12px;height:11px;background:#c80000"></div><div class="bx" style="left:1453px;top:268px;width:12px;height:11px;background:#800000"></div>
<span class="t n" style="right:25px;top:232px;color:#00e000">141</span><span class="t n" style="right:25px;top:253px;color:#00e000">204</span><span class="t n" style="right:25px;top:273px;color:#00e000">197</span>
<div class="bx" style="left:1563px;top:227px;width:12px;height:11px;background:#00ff00"></div><div class="bx" style="left:1563px;top:248px;width:12px;height:11px;background:#00c800"></div><div class="bx" style="left:1563px;top:268px;width:12px;height:11px;background:#008000"></div>

<span class="t g" style="left:1313px;top:297px">净大单</span><span class="t g" style="left:1313px;top:317px">净中单</span><span class="t g" style="left:1313px;top:337px">净小单</span>
<span class="t n gr" style="right:114px;top:297px">-141</span><span class="t n gr" style="right:114px;top:317px">-204</span><span class="t n gr" style="right:114px;top:337px">-197</span>
<div class="bx" style="left:1475px;top:288px;width:74px;height:18px;background:linear-gradient(#55c810,#1f8a00)"></div>
<div class="bx" style="left:1475px;top:308px;width:108px;height:17px;background:linear-gradient(#55c810,#1f8a00)"></div>
<div class="bx" style="left:1475px;top:328px;width:104px;height:17px;background:linear-gradient(#55c810,#1f8a00)"></div>
<div class="v" style="left:1474px;top:284px;height:65px;background:#333"></div>
<div class="h" style="left:1312px;top:349px;width:273px"></div>

<div class="tbh" style="left:1312px;top:350px;width:273px;height:19px;background:#1c1c1c"></div>
<span class="t g" style="left:1313px;top:360px">时间</span><span class="t g c" style="left:1429px;top:360px">总排名</span><span class="t g c" style="left:1544px;top:360px">大单净比</span>
<span class="t g" style="left:1313px;top:378px">今日</span><span class="t g" style="left:1321px;top:395px">2日</span><span class="t g" style="left:1321px;top:413px">3日</span><span class="t g" style="left:1321px;top:432px">5日</span>
<span class="t g" style="left:1418px;top:378px">第<b class="ye" style="font-size:14px">3200</b>名</span><span class="t g" style="left:1418px;top:395px">第<b class="ye" style="font-size:14px">2149</b>名</span><span class="t g" style="left:1418px;top:413px">第<b class="ye" style="font-size:14px">2031</b>名</span><span class="t g" style="left:1418px;top:432px">第<b class="ye" style="font-size:14px">2340</b>名</span>
<span class="t n" style="right:13px;top:378px;color:#00ff00">-26.04%</span><span class="t n" style="right:13px;top:395px;color:#00ff00">-7.42%</span><span class="t n" style="right:13px;top:413px;color:#00ff00">-5.01%</span><span class="t n" style="right:13px;top:432px;color:#00ff00">-4.40%</span>

<div class="h" style="left:1312px;top:442px;width:273px"></div>
<div class="hd" style="left:1312px;top:443px;width:273px;height:18px"></div>
<span class="t" style="left:1316px;top:453px;font-size:12.500px">业绩预测</span>
<div class="br" style="left:1516px;top:443px;width:21px;height:18px"></div><div class="br" style="left:1536px;top:443px;width:21px;height:18px"></div><div class="br" style="left:1556px;top:443px;width:29px;height:18px"></div>
<span class="t c" style="left:1526px;top:452px">?</span><span class="t c" style="left:1546px;top:452px">详</span><span class="t c" style="left:1570px;top:452px">全部</span>
<div class="tbh" style="left:1313px;top:463px;width:64px;height:18px"></div><div class="tbh" style="left:1378px;top:463px;width:102px;height:18px"></div><div class="tbh" style="left:1481px;top:463px;width:101px;height:18px"></div>
<span class="t c" style="left:1331px;top:473px;font-size:14px">年份</span><span class="t c" style="left:1428px;top:473px;font-size:14px">预测收益</span><span class="t c" style="left:1530px;top:473px;font-size:14px">预测PE</span>
<span class="t" style="left:1319px;top:492px">2018</span><span class="t c m" style="left:1428px;top:492px">0.50</span><span class="t c m" style="left:1530px;top:492px">6.58</span>
<span class="t" style="left:1319px;top:512px">2019</span><span class="t c m" style="left:1428px;top:512px">0.60</span><span class="t c m" style="left:1530px;top:512px">5.48</span>
<span class="t" style="left:1319px;top:532px">2020</span><span class="t c m" style="left:1428px;top:532px">----</span><span class="t c m" style="left:1530px;top:532px">----</span>

<div class="h" style="left:1312px;top:552px;width:273px"></div>
<div class="hd" style="left:1312px;top:553px;width:273px;height:16px"></div>
<span class="t" style="left:1317px;top:562px;font-size:12.500px">所有板块资金排名</span>
<div class="tbh" style="left:1313px;top:570px;width:107px;height:20px"></div><div class="tbh" style="left:1421px;top:570px;width:158px;height:20px"></div>
<span class="t g" style="left:1313px;top:580px;font-size:16px">名称</span><span class="t g" style="right:17px;top:580px;font-size:15px">大单净比<b style="font-size:14px">%</b></span>
<svg width="1585" height="649"><path fill="#bbb" d="M1571 574h5v6h4l-6.500 7l-6.500-7h4z"/></svg>
<span class="t ye" style="left:1313px;top:601px;font-size:15.500px">无人零售</span><span class="t n re" style="right:7px;top:601px">+23.95</span>
<span class="t ye" style="left:1313px;top:622px;font-size:15.500px">物流电商平台</span><span class="t n re" style="right:7px;top:622px">+18.30</span>
<span class="t ye" style="left:1313px;top:642px;font-size:15.500px">参股万达商业</span><span class="t n re" style="right:7px;top:642px">+16.60</span>

<!-- overlay -->
<svg width="1585" height="649" fill="none">
<ellipse cx="962" cy="339" rx="36" ry="47" stroke="#ffff00" stroke-width="3"/>
<ellipse cx="948.500" cy="471" rx="31.500" ry="41" stroke="#ffff00" stroke-width="3"/>
<ellipse cx="970" cy="543.500" rx="35" ry="18.500" stroke="#ffff00" stroke-width="3"/>
<path d="M975 371L1145 299" stroke="#f03c3c" stroke-width="3"/><path d="M1153 295L1140 293L1145 303Z" fill="#f03c3c"/>
<path d="M957 370L1167 276" stroke="#fff" stroke-width="3"/><path d="M1175 272L1161 270L1166 281Z" fill="#fff"/>
<path d="M957 572L1032 518" stroke="#f03c3c" stroke-width="3"/><path d="M1040 512L1026 514L1033 525Z" fill="#f03c3c"/>
</svg>

</div></body></html>
